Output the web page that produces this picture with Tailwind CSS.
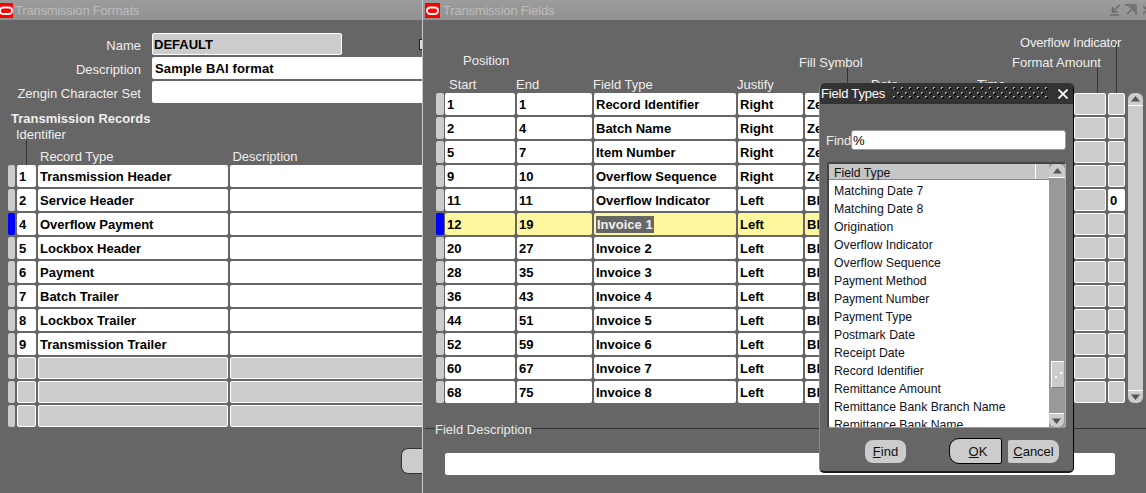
<!DOCTYPE html>
<html lang="en">
<head>
    <meta charset="UTF-8">
    <title>Transmission Formats</title>
    <script src="https://cdn.jsdelivr.net/npm/@tailwindcss/browser@4"></script>
</head>
<body class="relative w-[1146px] h-[493px] overflow-hidden bg-[#666666] font-['Liberation_Sans',Arial,sans-serif] text-[13px] leading-none text-[#eeeeee]">
    <div class="flex h-full">
        <!-- Transmission Formats window -->
        <section class="w-[422px] shrink-0 overflow-hidden">
            <header class="flex items-center h-5 bg-gradient-to-b from-[#9c9c9c] to-[#929292]">
                <svg width="13" height="15" viewBox="0 0 13 15"><rect width="13" height="15" fill="#ff0000"/><rect x="0" y="4.5" width="12" height="6.5" rx="3.2" fill="none" stroke="#fff" stroke-width="1.8"/></svg>
                <span class="ml-[2px] text-[#bcbcbc] tracking-[-0.2px]">Transmission Formats</span>
            </header>
            <div class="grid grid-cols-[141px_1fr] gap-x-[11px] gap-y-[2px] pt-[13px] w-[500px]">
                <label class="text-right self-center pt-[2px]">Name</label>
                <div class="flex items-center">
                    <div class="w-[190px] h-[22px] flex items-center pl-[1px] bg-[#cccccc] border border-white rounded-[2px] font-bold text-black">DEFAULT</div>
                    <span class="ml-[77px] w-[11px] h-[11px] bg-[#dddddd] border border-[#222222]"></span>
                </div>
                <label class="text-right self-center pt-[2px]">Description</label>
                <div class="h-[22px] flex items-center pl-[3px] bg-white rounded-[2px] font-bold text-black tracking-[0.15px]">Sample BAI format</div>
                <label class="text-right self-center pt-[2px]">Zengin Character Set</label>
                <div class="h-[22px] bg-white rounded-[2px]"></div>
            </div>
            <h2 class="mt-[9px] ml-[11px] font-bold">Transmission Records</h2>
            <div class="ml-[16px] mt-[3px] h-[13px]">Identifier</div>
            <div class="relative flex h-[15px] mt-[9px] pl-[40px] gap-[119px]">
                <span class="absolute left-[26px] -top-[10px] h-[25px] w-px bg-[#333333]"></span>
                <span>Record Type</span><span>Description</span>
            </div>
            <div id="records" class="flex flex-col gap-[2px] pl-[8px] w-[500px]"></div>
            <div class="flex justify-end pt-[21px]">
                <div class="w-[21px] h-[26px] bg-[#cccccc] border border-r-0 border-[#333333] rounded-l-[7px]"></div>
            </div>
        </section>

        <div class="w-px shrink-0 bg-[#c8c8c8]"></div>

        <!-- Transmission Fields window -->
        <section class="relative flex-1 min-w-0 overflow-hidden">
            <header class="flex items-center h-5 bg-gradient-to-b from-[#9c9c9c] to-[#929292]">
                <svg width="15" height="15" viewBox="0 0 15 15" class="ml-[2px]"><rect width="15" height="15" fill="#ff0000"/><rect x="2" y="4.5" width="11" height="6.5" rx="3.2" fill="none" stroke="#fff" stroke-width="1.8"/></svg>
                <span class="ml-[3px] text-[#bcbcbc] tracking-[-0.2px]">Transmission Fields</span>
                <span class="flex items-center ml-auto -mr-[5px]">
                    <svg width="10" height="12" viewBox="0 0 10 12" fill="none" stroke="#6a6a6a" stroke-width="1.5"><path d="M9.5 1 3 7.5M2.5 3v5h5M0 11h9"/></svg>
                    <svg width="12" height="12" viewBox="0 0 12 12" fill="none" stroke="#6a6a6a" stroke-width="1.5" class="ml-[5px]"><path d="M0 1h11v10M2 10l6.5-6.5M4 3h5v5"/></svg>
                    <svg width="8" height="12" viewBox="0 0 8 12" fill="none" stroke="#6a6a6a" stroke-width="1.5" class="ml-[6px]"><path d="M0 2l8 8M8 2l-8 8"/></svg>
                </span>
            </header>
            <div class="relative h-[73px]">
                <span class="absolute left-[40px] top-[34px]">Position</span>
                <span class="absolute left-[376px] top-[36px]">Fill Symbol</span>
                <span class="absolute left-[597px] top-[16px] tracking-[-0.2px]">Overflow Indicator</span>
                <span class="absolute left-[589px] top-[36px]">Format Amount</span>
                <span class="absolute left-[424px] top-[48px] h-[25px] w-px bg-[#333333]"></span>
                <span class="absolute left-[674px] top-[48px] h-[25px] w-px bg-[#333333]"></span>
                <span class="absolute left-[693px] top-[24px] h-[49px] w-px bg-[#333333]"></span>
                <div class="absolute top-[58px] left-[26px] grid grid-cols-[67px_77px_144px_134px_106px_60px]">
                    <span>Start</span><span>End</span><span>Field Type</span><span>Justify</span><span>Date</span><span>Time</span>
                </div>
            </div>
            <div class="flex items-start pl-[13px]">
                <div id="fields" class="flex flex-col gap-[2px]"></div>
                <div class="ml-[3px] w-[15px] h-[310px] flex flex-col justify-between bg-[#cccccc] rounded-[6px]">
                    <span class="flex justify-center items-center h-[13px] border-b border-white"><svg width="9" height="6"><path d="M0 5.5h9L4.5 0z" fill="#555555"/></svg></span>
                    <span class="flex justify-center items-center h-[13px] border-t border-white"><svg width="9" height="6"><path d="M0 .5h9L4.5 6z" fill="#555555"/></svg></span>
                </div>
            </div>
            <div class="flex items-center mt-[18px] h-[14px]">
                <span class="w-[10px] h-px bg-[#333333] shrink-0 ml-[2px]"></span>
                <span class="text-[#e8e8e8] translate-y-px">Field Description</span>
                <span class="flex-1 h-px bg-[#333333]"></span>
            </div>
            <div class="ml-[22px] mt-[18px] w-[670px] h-[22px] bg-white rounded-[2px]"></div>
        </section>
    </div>

    <!-- Field Types dialog -->
    <aside class="absolute left-[819px] top-[83px] w-[255px] h-[390px] flex flex-col bg-[#666666] border-l border-l-[#888888] border-r border-r-black border-b-2 border-b-[#1c1c1c] rounded-[5px]">
        <header class="flex items-center h-[21px] pl-[1px] pr-[5px] bg-[#333333] rounded-t-[5px] text-white">
            <span class="w-[65px] tracking-[-0.2px] whitespace-nowrap">Field Types</span>
            <svg width="156" height="14" class="ml-[7px]">
                <defs>
                    <pattern id="grip" width="8" height="9" patternUnits="userSpaceOnUse">
                        <rect x="0" y="0" width="2" height="2" fill="#aaaaaa"/><rect x="1" y="1" width="2" height="2" fill="#111111"/>
                        <rect x="4" y="5" width="2" height="2" fill="#aaaaaa"/><rect x="5" y="6" width="2" height="2" fill="#111111"/>
                    </pattern>
                </defs>
                <rect width="156" height="14" fill="url(#grip)"/>
            </svg>
            <svg width="10" height="10" viewBox="0 0 10 10" class="ml-auto" stroke="#ffffff" stroke-width="1.7"><path d="M.5.5l9 9M9.5.5l-9 9"/></svg>
        </header>
        <div class="flex items-center mt-[26px] ml-[6px] text-[#eeeeee]">
            <label class="w-[25px]">Find</label>
            <div class="w-[215px] h-[20px] flex items-center pl-[1px] bg-white border border-[#999999] rounded-[3px] text-black">%</div>
        </div>
        <div class="flex ml-[7px] mt-[12px] w-[239px] h-[266px] border-2 border-t-[#444444] border-l-[#444444] border-r-[#aaaaaa] border-b-[#999999] border-r-1 border-b-1 rounded-[3px] bg-white overflow-hidden">
            <div class="flex-1 min-w-0 overflow-hidden">
                <div class="flex h-[16px] bg-[#c6c6c6] border-b border-[#888888] text-[#111111] text-[12.25px]">
                    <span class="flex-1 pl-[5px] pt-[3px]">Field Type</span>
                    <span class="w-[14px] border-l border-white"></span>
                </div>
                <ul id="types" class="pl-[5px] pt-[2px] text-[12.25px] text-[#111122]"></ul>
            </div>
            <div class="relative w-[16px] shrink-0 bg-[#999999]">
                <span class="flex justify-center items-center h-[14px] bg-[#cccccc] rounded-t-[6px] border-b border-white"><svg width="9" height="6"><path d="M0 5.5h9L4.5 0z" fill="#555555"/></svg></span>
                <span class="absolute left-[2px] top-[197px] flex items-center justify-center w-[13px] h-[27px] bg-[#cccccc] border-t border-l border-t-white border-l-white border-b border-b-[#777777]">
                    <svg width="7" height="6"><rect x="5" y="0" width="2" height="2" fill="#ffffff"/><rect x="0" y="4" width="2" height="2" fill="#ffffff"/></svg>
                </span>
                <span class="absolute left-0 bottom-0 flex justify-center items-center w-[15px] h-[14px] bg-[#cccccc] rounded-b-[6px] border-t border-white"><svg width="9" height="6"><path d="M0 .5h9L4.5 6z" fill="#555555"/></svg></span>
            </div>
        </div>
        <div class="flex items-center mt-[10px] ml-[45px] text-[#111111]">
            <button class="w-[41px] h-[23px] bg-[#cccccc] rounded-[8px]"><u>F</u>ind</button>
            <button class="ml-[43px] w-[53px] h-[26px] pl-[5px] bg-[#cccccc] border border-black rounded-l-[10px] rounded-r-[2px]"><u>O</u>K</button>
            <button class="ml-[6px] w-[51px] h-[23px] bg-[#cccccc] rounded-r-[8px] rounded-l-[2px]"><u>C</u>ancel</button>
        </div>
    </aside>

    <script>
        const plain = 'h-[22px] flex items-center pl-[2px] bg-white rounded-[2px] font-bold text-black overflow-hidden whitespace-nowrap';
        const current = 'h-[22px] flex items-center pl-[2px] bg-[#fff79e] rounded-[2px] font-bold text-black overflow-hidden whitespace-nowrap';
        const empty = 'h-[22px] bg-[#cccccc] border border-white rounded-[2px]';
        const stub = 'h-[22px] bg-[#cccccc] rounded-[2px]';
        const stubOn = 'h-[22px] bg-[#0000ff] rounded-[2px]';

        // Identifier, record type; null is an unused row
        const records = [
            ['1', 'Transmission Header'], ['2', 'Service Header'], ['4', 'Overflow Payment'],
            ['5', 'Lockbox Header'], ['6', 'Payment'], ['7', 'Batch Trailer'],
            ['8', 'Lockbox Trailer'], ['9', 'Transmission Trailer'], null, null, null
        ];
        document.getElementById('records').innerHTML = records.map((r, i) => {
            const cell = r ? plain : empty;
            return `<div class="grid grid-cols-[7px_19px_190px_300px] gap-x-[2px]">
                <div class="${i === 2 ? stubOn : stub}"></div>
                <div class="${cell}">${r ? r[0] : ''}</div>
                <div class="${cell}">${r ? r[1] : ''}</div>
                <div class="${cell}"></div>
            </div>`;
        }).join('');

        // Only the start of the fill symbol shows beside the dialog
        const fields = [
            ['1', '1', 'Record Identifier', 'Right', 'Ze'], ['2', '4', 'Batch Name', 'Right', 'Ze'],
            ['5', '7', 'Item Number', 'Right', 'Ze'], ['9', '10', 'Overflow Sequence', 'Right', 'Ze'],
            ['11', '11', 'Overflow Indicator', 'Left', 'Bl'], ['12', '19', 'Invoice 1', 'Left', 'Bl'],
            ['20', '27', 'Invoice 2', 'Left', 'Bl'], ['28', '35', 'Invoice 3', 'Left', 'Bl'],
            ['36', '43', 'Invoice 4', 'Left', 'Bl'], ['44', '51', 'Invoice 5', 'Left', 'Bl'],
            ['52', '59', 'Invoice 6', 'Left', 'Bl'], ['60', '67', 'Invoice 7', 'Left', 'Bl'],
            ['68', '75', 'Invoice 8', 'Left', 'Bl']
        ];
        document.getElementById('fields').innerHTML = fields.map((f, i) => {
            const on = i === 5;
            const cell = on ? current : plain;
            const type = on ? '<span class="bg-[#666666] text-[#eeeeee] px-[1px] py-[2px]">Invoice 1</span>' : f[2];
            return `<div class="grid grid-cols-[7px_70px_75px_142px_65px_63px_105px_95px_32px_17px] gap-x-[2px]">
                <div class="${on ? stubOn : stub} -mr-[1px]"></div>
                <div class="${cell}">${f[0]}</div>
                <div class="${cell}">${f[1]}</div>
                <div class="${cell}">${type}</div>
                <div class="${cell}">${f[3]}</div>
                <div class="${cell}">${f[4]}</div>
                <div class="${empty}"></div>
                <div class="${empty}"></div>
                <div class="${empty}"></div>
                <div class="${i === 4 ? plain : empty}">${i === 4 ? '0' : ''}</div>
            </div>`;
        }).join('');

        const types = ['Matching Date 7', 'Matching Date 8', 'Origination', 'Overflow Indicator', 'Overflow Sequence',
            'Payment Method', 'Payment Number', 'Payment Type', 'Postmark Date', 'Receipt Date', 'Record Identifier',
            'Remittance Amount', 'Remittance Bank Branch Name', 'Remittance Bank Name'];
        document.getElementById('types').innerHTML = types.map(t => `<li class="h-[18px] flex items-center whitespace-nowrap">${t}</li>`).join('');
    </script>
</body>
</html>
